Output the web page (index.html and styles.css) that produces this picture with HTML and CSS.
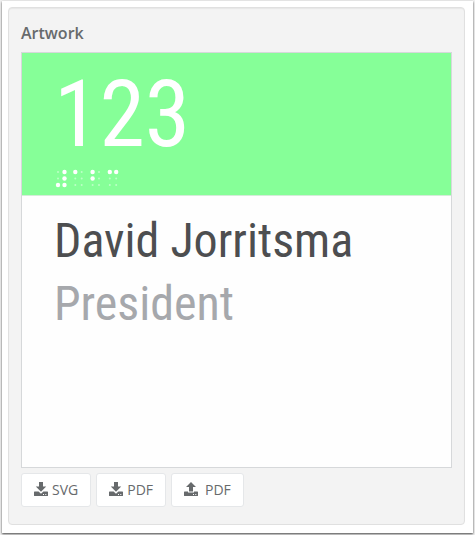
FILE: index.html
```html
<!DOCTYPE html>
<html lang="en">
<head>
    <meta charset="UTF-8">
    <meta name="viewport" content="width=device-width, initial-scale=1.0">
    <title>Artwork</title>
    <link rel="stylesheet" href="styles.css">
</head>
<body>
    <main class="sheet">
        <section class="well">
            <h1 class="well-title">Artwork</h1>

            <div class="artwork">
                <div class="artwork-header">
                    <div class="room-number">123</div>
                    <svg class="braille" width="65" height="19" viewBox="0 0 65 19" fill="#fff" role="img" aria-label="123 in braille">
                        <!-- empty positions -->
                        <g opacity="0.45">
                            <circle cx="4" cy="3" r="1"/><circle cx="4" cy="9.5" r="1"/>
                            <circle cx="27.7" cy="3" r="1"/><circle cx="21.3" cy="9.5" r="1"/><circle cx="27.7" cy="9.5" r="1"/><circle cx="21.3" cy="16" r="1"/><circle cx="27.7" cy="16" r="1"/>
                            <circle cx="45" cy="3" r="1"/><circle cx="45" cy="9.5" r="1"/><circle cx="38.6" cy="16" r="1"/><circle cx="45" cy="16" r="1"/>
                            <circle cx="55.8" cy="9.5" r="1"/><circle cx="62.2" cy="9.5" r="1"/><circle cx="55.8" cy="16" r="1"/><circle cx="62.2" cy="16" r="1"/>
                        </g>
                        <!-- raised dots -->
                        <circle cx="10.5" cy="3" r="2.2"/><circle cx="10.5" cy="9.5" r="2.2"/><circle cx="4" cy="16" r="2.2"/><circle cx="10.5" cy="16" r="2.2"/>
                        <circle cx="21.3" cy="3" r="2.2"/>
                        <circle cx="38.6" cy="3" r="2.2"/><circle cx="38.6" cy="9.5" r="2.2"/>
                        <circle cx="55.8" cy="3" r="2.2"/><circle cx="62.2" cy="3" r="2.2"/>
                    </svg>
                </div>
                <div class="artwork-body">
                    <div class="person-name">David Jorritsma</div>
                    <div class="person-role">President</div>
                </div>
            </div>

            <div class="actions">
                <button type="button" class="btn">
                    <svg class="icon" viewBox="0 0 14 14" aria-hidden="true">
                        <path d="M5 0h4v4.500h3.200L7 9.700 1.800 4.500H5z"/>
                        <path fill-rule="evenodd" d="M.6 9.500h4L7 11.700l2.400-2.200h4q.6 0 .6.600v3.300q0 .6-.6.600H.6q-.6 0-.6-.600v-3.300q0-.6.600-.6zM9 12v1h1v-1zM11.300 12v1h1v-1z"/>
                    </svg>
                    SVG
                </button>
                <button type="button" class="btn">
                    <svg class="icon" viewBox="0 0 14 14" aria-hidden="true">
                        <path d="M5 0h4v4.500h3.200L7 9.700 1.800 4.500H5z"/>
                        <path fill-rule="evenodd" d="M.6 9.500h4L7 11.700l2.400-2.200h4q.6 0 .6.600v3.300q0 .6-.6.600H.6q-.6 0-.6-.600v-3.300q0-.6.600-.6zM9 12v1h1v-1zM11.300 12v1h1v-1z"/>
                    </svg>
                    PDF
                </button>
                <button type="button" class="btn btn-upload">
                    <svg class="icon" viewBox="0 0 14 14" aria-hidden="true">
                        <path d="M7 0l5 5H9v4.500H5V5H2z"/>
                        <path fill-rule="evenodd" d="M.6 9.500H4v1h6v-1h3.400q.6 0 .6.600v3.300q0 .6-.6.600H.6q-.6 0-.6-.600v-3.300q0-.6.600-.6zM9 12v1h1v-1zM11.300 12v1h1v-1z"/>
                    </svg>
                    PDF
                </button>
            </div>
        </section>
    </main>
</body>
</html>
```

FILE: styles.css
```css
* {
    box-sizing: border-box;
}

body {
    margin: 0;
    padding: 1px 2px 3px;
    background-color: #f0f0f0;
    color: #676a6c;
    font-family: "Open Sans", "Liberation Sans", sans-serif;
    font-size: 14px;
}

.sheet {
    padding: 6px 8px 8px 6px;
    background-color: #fff;
    box-shadow: 0 1px 2px rgba(0, 0, 0, 0.7);
}

.well {
    padding: 12px;
    background-color: #f3f3f3;
    border: 1px solid #e0e0e0;
    border-radius: 4px;
    box-shadow: inset 0 1px 1px rgba(0, 0, 0, 0.05);
}

.well-title {
    margin: 0 0 6px;
    font-size: 16px;
    font-weight: 600;
    line-height: 26px;
}

.artwork {
    background-color: #fefefe;
    border: 1px solid #d6d8da;
    font-family: "Roboto Condensed", "Liberation Sans Narrow", sans-serif;
}

.artwork-header {
    padding: 12px 32px 7px;
    background-color: #86ff98;
    border-bottom: 1px solid #d4ecd8;
    color: #fff;
}

.room-number {
    padding-bottom: 4px;
    font-size: 92px;
    line-height: 100px;
}

.braille {
    display: block;
}

.artwork-body {
    min-height: 271px;
    padding: 13px 32px;
    font-size: 48px;
    line-height: 63px;
}

.person-name {
    color: #4d4e50;
}

.person-role {
    color: #a6a8ac;
}

.actions {
    display: flex;
    gap: 5px;
    padding: 5px 0;
}

.btn {
    display: flex;
    align-items: center;
    gap: 4px;
    height: 34px;
    padding: 0 12px 2px;
    background-color: #fff;
    border: 1px solid #e5e7e9;
    border-radius: 3px;
    color: #676a6c;
    font-family: inherit;
    font-size: 14px;
    cursor: pointer;
}

.btn:hover {
    border-color: #d2d2d2;
}

.btn-upload {
    gap: 7px;
}

.icon {
    width: 14px;
    height: 14px;
    fill: currentColor;
}
```
